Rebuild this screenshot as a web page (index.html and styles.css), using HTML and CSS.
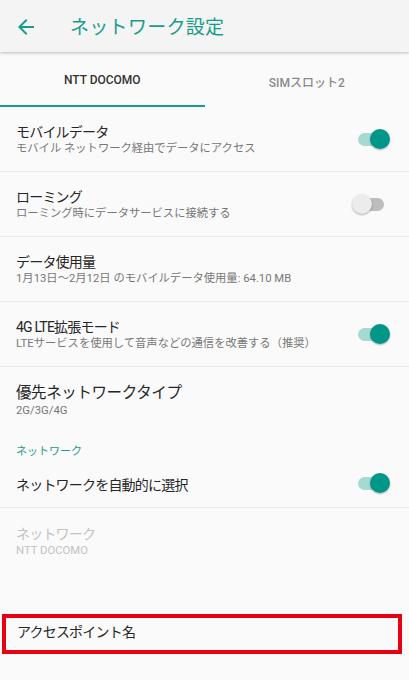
FILE: index.html
```html
<!DOCTYPE html>
<html lang="ja">
<head>
    <meta charset="UTF-8">
    <meta name="viewport" content="width=device-width, initial-scale=1.0">
    <title>ネットワーク設定</title>
    <link rel="stylesheet" href="styles.css">
</head>
<body>
    <header class="toolbar">
        <svg class="back" width="24" height="24" viewBox="0 0 24 24">
            <path d="M20 11H7.83l5.59-5.59L12 4l-8 8 8 8 1.41-1.41L7.83 13H20v-2z" fill="currentColor"/>
        </svg>
        <h1>ネットワーク設定</h1>
    </header>

    <nav class="tabs">
        <div class="tab active">NTT DOCOMO</div>
        <div class="tab">SIMスロット2</div>
    </nav>

    <ul class="prefs">
        <li class="pref divided">
            <div class="text">
                <div class="title">モバイルデータ</div>
                <div class="summary">モバイル ネットワーク経由でデータにアクセス</div>
            </div>
            <span class="switch on"></span>
        </li>
        <li class="pref divided">
            <div class="text">
                <div class="title">ローミング</div>
                <div class="summary">ローミング時にデータサービスに接続する</div>
            </div>
            <span class="switch"></span>
        </li>
        <li class="pref divided">
            <div class="text">
                <div class="title">データ使用量</div>
                <div class="summary">1月13日〜2月12日 のモバイルデータ使用量: 64.10 MB</div>
            </div>
        </li>
        <li class="pref divided">
            <div class="text">
                <div class="title">4G LTE拡張モード</div>
                <div class="summary">LTEサービスを使用して音声などの通信を改善する（推奨）</div>
            </div>
            <span class="switch on"></span>
        </li>
        <li class="pref">
            <div class="text">
                <div class="title big">優先ネットワークタイプ</div>
                <div class="summary">2G/3G/4G</div>
            </div>
        </li>
        <li class="category">ネットワーク</li>
        <li class="pref single divided">
            <div class="text">
                <div class="title">ネットワークを自動的に選択</div>
            </div>
            <span class="switch on"></span>
        </li>
        <li class="pref disabled">
            <div class="text">
                <div class="title">ネットワーク</div>
                <div class="summary">NTT DOCOMO</div>
            </div>
        </li>
        <li class="pref marked">
            <div class="text">
                <div class="title">アクセスポイント名</div>
            </div>
        </li>
    </ul>
</body>
</html>
```

FILE: styles.css
```css
body {
    margin: 0;
    background-color: #fafafa;
    font-family: Roboto, "Noto Sans CJK JP", sans-serif;
    color: #212121;
    overflow: hidden;
}
.toolbar {
    height: 52px;
    display: flex;
    align-items: center;
    background-color: #f4f4f4;
    box-shadow: 0 1px 3px rgba(0,0,0,0.25);
    position: relative;
    z-index: 1;
    color: #1a9c8b;
}
.toolbar .back {
    margin-left: 14px;
    margin-top: 1px;
}
.toolbar h1 {
    margin: 0 0 2px 32px;
    font-size: 19px;
    font-weight: normal;
    letter-spacing: 0.3px;
}
.tabs {
    display: flex;
    height: 55px;
    background-color: #fafafa;
}
.tab {
    flex: 1;
    display: flex;
    align-items: center;
    justify-content: center;
    font-size: 12px;
    font-weight: 500;
    color: #8a8a8a;
    padding-top: 3px;
    box-sizing: border-box;
}
.tab.active {
    color: #333;
    border-bottom: 2px solid #1a9c8b;
}
.prefs {
    list-style: none;
    margin: 0;
    padding: 0;
}
.pref {
    height: 65px;
    display: flex;
    align-items: center;
    padding: 0 16px;
    box-sizing: border-box;
}
.pref.single {
    height: 48px;
}
.divided {
    border-bottom: 1px solid #ececec;
}
.pref .text {
    flex: 1;
    padding-top: 2px;
}
.title {
    font-size: 14px;
    line-height: 18px;
    letter-spacing: -0.8px;
    color: #262626;
}
.title.big {
    font-size: 15.5px;
    line-height: 20px;
    letter-spacing: -0.4px;
}
.summary {
    font-size: 11.3px;
    line-height: 16px;
    color: #777;
}
.disabled .title,
.disabled .summary {
    color: #c2c2c2;
}
.category {
    height: 28px;
    box-sizing: border-box;
    padding: 12px 16px 0;
    font-size: 11px;
    line-height: 16px;
    color: #1a9c8b;
}
.switch {
    position: relative;
    width: 26px;
    height: 13px;
    border-radius: 7px;
    background-color: #bdbdbd;
    margin-right: 9px;
}
.switch::after {
    content: "";
    position: absolute;
    top: -4px;
    left: -6px;
    width: 20px;
    height: 20px;
    border-radius: 50%;
    background-color: #ececec;
    box-shadow: 0 1px 2px rgba(0,0,0,0.3);
}
.switch.on {
    background-color: #a6d9d2;
}
.switch.on::after {
    left: 12px;
    background-color: #009688;
}
.marked {
    height: 40px;
    margin: 41px 7px 0 2px;
    padding: 0 11px 6px;
    border: 4px solid #e60012;
}
```
